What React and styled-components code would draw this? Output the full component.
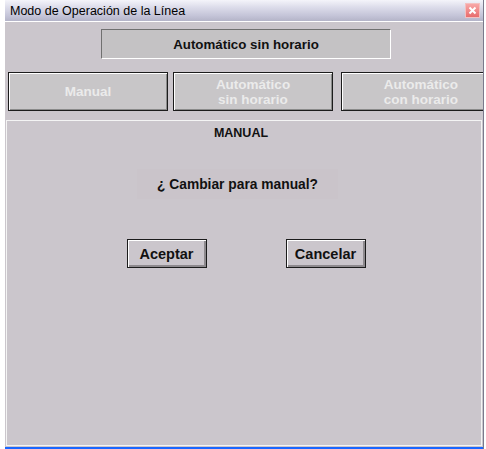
import styled, { createGlobalStyle } from "styled-components"

const Global = createGlobalStyle`
  html, body { margin: 0; padding: 0; background: #ffffff; }
  body { font-family: "Liberation Sans", Arial, sans-serif; }
`

const Window = styled.div`
  margin-left: 5px;
  width: 479px;
  height: 449px;
  display: flex;
  flex-direction: column;
  overflow: hidden;
  background: #cbc6cc;
  border-right: 1px solid #7a7a8c;
  box-sizing: border-box;
`

const TitleBar = styled.div`
  height: 22px;
  flex: none;
  display: flex;
  align-items: center;
  justify-content: space-between;
  padding: 0 3px 0 5px;
  box-sizing: border-box;
  background: linear-gradient(#f4f4fa 0%, #dcdcea 35%, #c4c4d8 75%, #b4b4c8 100%);
  border-bottom: 1px solid #ffffff;
`

const Caption = styled.span`
  font-size: 12.5px;
  color: #000;
`

const CloseBox = styled.div`
  width: 13px;
  height: 13px;
  background: linear-gradient(#f8a8a8, #e86c6c);
  border: 1px solid #f4c0c0;
  display: flex;
  align-items: center;
  justify-content: center;
`

const Content = styled.div`
  flex: 1;
  display: flex;
  flex-direction: column;
  padding: 7px 0 0 0;
  border-bottom: 2px solid #1a66ff;
`

const StatusRow = styled.div`
  display: flex;
  padding-left: 96px;
`

const StatusBox = styled.div`
  width: 290px;
  height: 30px;
  box-sizing: border-box;
  border: 1px solid;
  border-color: #707070 #ffffff #ffffff #707070;
  background: #c4c2c4;
  display: flex;
  align-items: center;
  justify-content: center;
  font-weight: 700;
  font-size: 13.3px;
  color: #111;
`

const ModeRow = styled.div`
  display: flex;
  gap: 5px;
  margin-top: 13px;
  padding-left: 3px;
`

const ModeButton = styled.div`
  flex: none;
  width: 160px;
  height: 39px;
  box-sizing: border-box;
  margin-left: ${p => p.$extra || 0}px;
  border: 1px solid #1c1c1c;
  box-shadow: inset 1px 1px 0 #ffffff, inset -1px -1px 0 #8a8a8a;
  background: #c8c6c8;
  display: flex;
  align-items: center;
  justify-content: center;
  text-align: center;
  color: #ebebeb;
  font-weight: 700;
  font-size: 13.5px;
  line-height: 15px;
`

const Panel = styled.div`
  flex: 1;
  margin: 9px 1px 1px 1px;
  border: 1px solid #f4f4f4;
  display: flex;
  flex-direction: column;
  align-items: center;
`

const Heading = styled.div`
  margin: 5px 6px 0 0;
  font-weight: 700;
  font-size: 12.5px;
  color: #111;
`

const Question = styled.div`
  margin: 29px 13px 0 0;
  width: 201px;
  height: 30px;
  display: flex;
  align-items: center;
  justify-content: center;
  background: #cac4ca;
  font-weight: 700;
  font-size: 13.8px;
  color: #111;
`

const ActionRow = styled.div`
  display: flex;
  gap: 79px;
  margin-top: 40px;
  padding-left: 4px;
`

const ActionButton = styled.div`
  width: 80px;
  height: 29px;
  box-sizing: border-box;
  border: 1px solid #1c1c1c;
  box-shadow: inset 1px 1px 0 #ffffff, inset -2px -2px 0 #8e8a8e;
  background: #cbc6cc;
  display: flex;
  align-items: center;
  justify-content: center;
  font-weight: 700;
  font-size: 14.5px;
  color: #111;
`

export default function App() {
  return (
    <>
      <Global />
      <Window>
        <TitleBar>
          <Caption>Modo de Operación de la Línea</Caption>
          <CloseBox>
            <svg width="9" height="9" viewBox="0 0 9 9">
              <path d="M1.5 1.5 L7.5 7.5 M7.5 1.5 L1.5 7.5" stroke="#fff" strokeWidth="2" />
            </svg>
          </CloseBox>
        </TitleBar>
        <Content>
          <StatusRow>
            <StatusBox>Automático sin horario</StatusBox>
          </StatusRow>
          <ModeRow>
            <ModeButton>Manual</ModeButton>
            <ModeButton>Automático<br />sin horario</ModeButton>
            <ModeButton $extra={3}>Automático<br />con horario</ModeButton>
          </ModeRow>
          <Panel>
            <Heading>MANUAL</Heading>
            <Question>¿ Cambiar para manual?</Question>
            <ActionRow>
              <ActionButton>Aceptar</ActionButton>
              <ActionButton>Cancelar</ActionButton>
            </ActionRow>
          </Panel>
        </Content>
      </Window>
    </>
  )
}
